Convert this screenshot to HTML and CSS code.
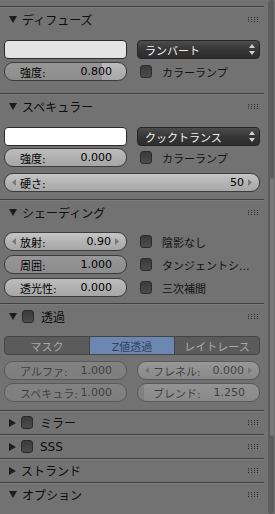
FILE: index.html
```html
<!DOCTYPE html>
<html lang="ja">
  <head>
    <meta charset="UTF-8" />
    <title>マテリアル</title>
    <link rel="stylesheet" href="styles.css">
  </head>
  <body>
    <div class="editor">
      <div class="props">
        <!-- diffuse -->
        <section class="panel">
          <div class="ph">
            <svg class="tri" width="8" height="7" viewBox="0 0 8 7"><path d="M0 0H8L4 7Z" /></svg>
            <span>ディフューズ</span>
            <svg class="grip" width="11" height="5" viewBox="0 0 11 5"><path d="M0 0h1v1H0zM3 0h1v1H3zM6 0h1v1H6zM9 0h1v1H9zM0 2h1v1H0zM3 2h1v1H3zM6 2h1v1H6zM9 2h1v1H9zM0 4h1v1H0zM3 4h1v1H3zM6 4h1v1H6zM9 4h1v1H9z" /></svg>
          </div>
          <div class="pb p1">
            <div class="row">
              <div class="swatch" style="background: #e3e3e3"></div>
              <div class="menu">ランバート<svg class="updown" width="6" height="11" viewBox="0 0 6 11"><path d="M0 4L3 0L6 4ZM0 7H6L3 11Z" /></svg></div>
            </div>
            <div class="row">
              <div class="num" style="--v: 80%"><span>強度:</span><span>0.800</span></div>
              <label class="check"><i class="box"></i>カラーランプ</label>
            </div>
          </div>
        </section>

        <!-- specular -->
        <section class="panel">
          <div class="ph">
            <svg class="tri" width="8" height="7" viewBox="0 0 8 7"><path d="M0 0H8L4 7Z" /></svg>
            <span>スペキュラー</span>
            <svg class="grip" width="11" height="5" viewBox="0 0 11 5"><path d="M0 0h1v1H0zM3 0h1v1H3zM6 0h1v1H6zM9 0h1v1H9zM0 2h1v1H0zM3 2h1v1H3zM6 2h1v1H6zM9 2h1v1H9zM0 4h1v1H0zM3 4h1v1H3zM6 4h1v1H6zM9 4h1v1H9z" /></svg>
          </div>
          <div class="pb p2">
            <div class="row">
              <div class="swatch" style="background: #ffffff"></div>
              <div class="menu">クックトランス<svg class="updown" width="6" height="11" viewBox="0 0 6 11"><path d="M0 4L3 0L6 4ZM0 7H6L3 11Z" /></svg></div>
            </div>
            <div class="row">
              <div class="num" style="--v: 0%"><span>強度:</span><span>0.000</span></div>
              <label class="check"><i class="box"></i>カラーランプ</label>
            </div>
            <div class="row one gap-top">
              <div class="num field">
                <svg class="ar" width="4" height="7" viewBox="0 0 4 7"><path d="M4 0V7L0 3.5Z" /></svg>
                <span class="lbl">硬さ:</span>
                <span class="val">50</span>
                <svg class="ar" width="4" height="7" viewBox="0 0 4 7"><path d="M0 0V7L4 3.5Z" /></svg>
              </div>
            </div>
          </div>
        </section>

        <!-- shading -->
        <section class="panel">
          <div class="ph">
            <svg class="tri" width="8" height="7" viewBox="0 0 8 7"><path d="M0 0H8L4 7Z" /></svg>
            <span>シェーディング</span>
            <svg class="grip" width="11" height="5" viewBox="0 0 11 5"><path d="M0 0h1v1H0zM3 0h1v1H3zM6 0h1v1H6zM9 0h1v1H9zM0 2h1v1H0zM3 2h1v1H3zM6 2h1v1H6zM9 2h1v1H9zM0 4h1v1H0zM3 4h1v1H3zM6 4h1v1H6zM9 4h1v1H9z" /></svg>
          </div>
          <div class="pb p3">
            <div class="row">
              <div class="num field">
                <svg class="ar" width="4" height="7" viewBox="0 0 4 7"><path d="M4 0V7L0 3.5Z" /></svg>
                <span class="lbl">放射:</span>
                <span class="val">0.90</span>
                <svg class="ar" width="4" height="7" viewBox="0 0 4 7"><path d="M0 0V7L4 3.5Z" /></svg>
              </div>
              <label class="check"><i class="box"></i>陰影なし</label>
            </div>
            <div class="row">
              <div class="num" style="--v: 100%"><span>周囲:</span><span>1.000</span></div>
              <label class="check"><i class="box"></i>タンジェントシ...</label>
            </div>
            <div class="row">
              <div class="num" style="--v: 0%"><span>透光性:</span><span>0.000</span></div>
              <label class="check"><i class="box"></i>三次補間</label>
            </div>
          </div>
        </section>

        <!-- transparency -->
        <section class="panel">
          <div class="ph">
            <svg class="tri" width="8" height="7" viewBox="0 0 8 7"><path d="M0 0H8L4 7Z" /></svg>
            <i class="box hbox"></i>
            <span>透過</span>
            <svg class="grip" width="11" height="5" viewBox="0 0 11 5"><path d="M0 0h1v1H0zM3 0h1v1H3zM6 0h1v1H6zM9 0h1v1H9zM0 2h1v1H0zM3 2h1v1H3zM6 2h1v1H6zM9 2h1v1H9zM0 4h1v1H0zM3 4h1v1H3zM6 4h1v1H6zM9 4h1v1H9z" /></svg>
          </div>
          <div class="pb p4">
            <div class="tabs">
              <span>マスク</span>
              <span class="on">Z値透過</span>
              <span>レイトレース</span>
            </div>
            <div class="row dis gap-top">
              <div class="num" style="--v: 100%"><span>アルファ:</span><span>1.000</span></div>
              <div class="num field">
                <svg class="ar" width="4" height="7" viewBox="0 0 4 7"><path d="M4 0V7L0 3.5Z" /></svg>
                <span class="lbl">フレネル:</span>
                <span class="val">0.000</span>
                <svg class="ar" width="4" height="7" viewBox="0 0 4 7"><path d="M0 0V7L4 3.5Z" /></svg>
              </div>
            </div>
            <div class="row dis">
              <div class="num" style="--v: 100%"><span>スペキュラ:</span><span>1.000</span></div>
              <div class="num" style="--v: 5%"><span>ブレンド:</span><span>1.250</span></div>
            </div>
          </div>
        </section>

        <!-- collapsed panels -->
        <section class="panel">
          <div class="ph small">
            <svg class="tri" width="7" height="8" viewBox="0 0 7 8"><path d="M0 0V8L7 4Z" /></svg>
            <i class="box hbox"></i>
            <span>ミラー</span>
            <svg class="grip" width="11" height="5" viewBox="0 0 11 5"><path d="M0 0h1v1H0zM3 0h1v1H3zM6 0h1v1H6zM9 0h1v1H9zM0 2h1v1H0zM3 2h1v1H3zM6 2h1v1H6zM9 2h1v1H9zM0 4h1v1H0zM3 4h1v1H3zM6 4h1v1H6zM9 4h1v1H9z" /></svg>
          </div>
        </section>
        <section class="panel">
          <div class="ph small">
            <svg class="tri" width="7" height="8" viewBox="0 0 7 8"><path d="M0 0V8L7 4Z" /></svg>
            <i class="box hbox"></i>
            <span>SSS</span>
            <svg class="grip" width="11" height="5" viewBox="0 0 11 5"><path d="M0 0h1v1H0zM3 0h1v1H3zM6 0h1v1H6zM9 0h1v1H9zM0 2h1v1H0zM3 2h1v1H3zM6 2h1v1H6zM9 2h1v1H9zM0 4h1v1H0zM3 4h1v1H3zM6 4h1v1H6zM9 4h1v1H9z" /></svg>
          </div>
        </section>
        <section class="panel">
          <div class="ph small">
            <svg class="tri" width="7" height="8" viewBox="0 0 7 8"><path d="M0 0V8L7 4Z" /></svg>
            <span>ストランド</span>
            <svg class="grip" width="11" height="5" viewBox="0 0 11 5"><path d="M0 0h1v1H0zM3 0h1v1H3zM6 0h1v1H6zM9 0h1v1H9zM0 2h1v1H0zM3 2h1v1H3zM6 2h1v1H6zM9 2h1v1H9zM0 4h1v1H0zM3 4h1v1H3zM6 4h1v1H6zM9 4h1v1H9z" /></svg>
          </div>
        </section>
        <section class="panel">
          <div class="ph small">
            <svg class="tri" width="8" height="7" viewBox="0 0 8 7"><path d="M0 0H8L4 7Z" /></svg>
            <span>オプション</span>
            <svg class="grip" width="11" height="5" viewBox="0 0 11 5"><path d="M0 0h1v1H0zM3 0h1v1H3zM6 0h1v1H6zM9 0h1v1H9zM0 2h1v1H0zM3 2h1v1H3zM6 2h1v1H6zM9 2h1v1H9zM0 4h1v1H0zM3 4h1v1H3zM6 4h1v1H6zM9 4h1v1H9z" /></svg>
          </div>
        </section>
      </div>
      <div class="scroll">
        <div class="track"><div class="thumb"></div></div>
      </div>
    </div>
  </body>
</html>
```

FILE: styles.css
```css
* {
  margin: 0;
  padding: 0;
  box-sizing: border-box;
}

body {
  font-family: "DejaVu Sans", "Noto Sans CJK JP", sans-serif;
  font-size: 11px;
  color: #000;
  background-color: #727272;
}

.editor {
  display: flex;
  width: 275px;
  height: 514px;
  overflow: hidden;
}

.props {
  width: 264px;
  padding-top: 6px;
}

/* panels */
.panel {
  border-top: 1px solid #3f3f3f;
  box-shadow: inset 0 1px 0 #7c7c7c;
}

.ph {
  display: flex;
  align-items: center;
  height: 24px;
  padding: 0 5px 0 9px;
  font-size: 12px;
  color: #0d0d0d;
}
.ph.small {
  height: 23px;
}
.ph .tri {
  fill: #1c1c1c;
  margin-right: 5px;
}
.ph .hbox {
  margin-right: 7px;
}
.ph .grip {
  margin-left: auto;
  fill: #2e2e2e;
}

.pb {
  display: flex;
  flex-direction: column;
  gap: 3px;
  padding: 9px 4px 12px;
}
.pb.p2 {
  gap: 2px;
  padding-bottom: 7px;
}
.pb.p3 {
  gap: 4px;
  padding: 8px 4px 6px;
}
.pb.p4 {
  gap: 3px;
  padding: 8px 4px 8px;
}
.gap-top {
  margin-top: 4px;
}
.p4 .gap-top {
  margin-top: 3px;
}

.row {
  display: grid;
  grid-template-columns: 1fr 1fr;
  gap: 10px;
  height: 19px;
}
.row.one {
  grid-template-columns: 1fr;
}

/* widgets */
.swatch {
  border: 1px solid #2a2a2a;
  border-radius: 4px;
}

.menu {
  display: flex;
  align-items: center;
  justify-content: space-between;
  padding: 0 4px 0 7px;
  border: 1px solid #262626;
  border-radius: 4px;
  background: linear-gradient(#4c4c4c, #363636 50%, #2c2c2c);
  color: #f2f2f2;
  font-size: 11px;
}
.menu .updown {
  fill: #d0d0d0;
}

.num {
  display: flex;
  align-items: center;
  justify-content: space-between;
  padding: 0 14px 0 15px;
  border: 1px solid #3c3c3c;
  border-radius: 9px;
  background:
    linear-gradient(to right, rgba(120, 120, 120, 0.55) var(--v), transparent var(--v)),
    linear-gradient(#bcbcbc, #a6a6a6);
  white-space: nowrap;
}
.num.field {
  padding: 0 7px;
  background: linear-gradient(#c6c6c6, #b4b4b4 50%, #a8a8a8);
}
.num.field .ar {
  fill: #7a7a7a;
}
.num.field .lbl {
  margin-left: 4px;
  margin-right: auto;
}
.num.field .val {
  margin-right: 4px;
}

.check {
  display: flex;
  align-items: center;
  gap: 10px;
  padding-left: 3px;
  color: #111;
  white-space: nowrap;
  overflow: hidden;
}

.box {
  display: block;
  flex: none;
  width: 12px;
  height: 13px;
  border: 1px solid #2b2b2b;
  border-radius: 3px;
  background: linear-gradient(#3a3a3a, #4c4c4c);
}

.tabs {
  display: grid;
  grid-template-columns: 84px 85px 1fr;
  height: 19px;
  border: 1px solid #444;
  border-radius: 4px;
  overflow: hidden;
  background: #5b5b5b;
}
.tabs span {
  display: flex;
  align-items: center;
  justify-content: center;
  color: #a8a8a8;
  border-left: 1px solid #454545;
}
.tabs span:first-child {
  border-left: none;
}
.tabs span.on {
  background: #6c88b2;
  color: #34425c;
}

.row.dis .num {
  opacity: 0.45;
}

/* scrollbar */
.scroll {
  width: 11px;
  padding: 0 1px 0 4px;
}
.track {
  height: 100%;
  padding-top: 178px;
  background: #5d5d5d;
  border-radius: 3px;
}
.thumb {
  height: 258px;
  margin-left: 2px;
  border-radius: 3px;
  background: #7a7a7a;
}
```
